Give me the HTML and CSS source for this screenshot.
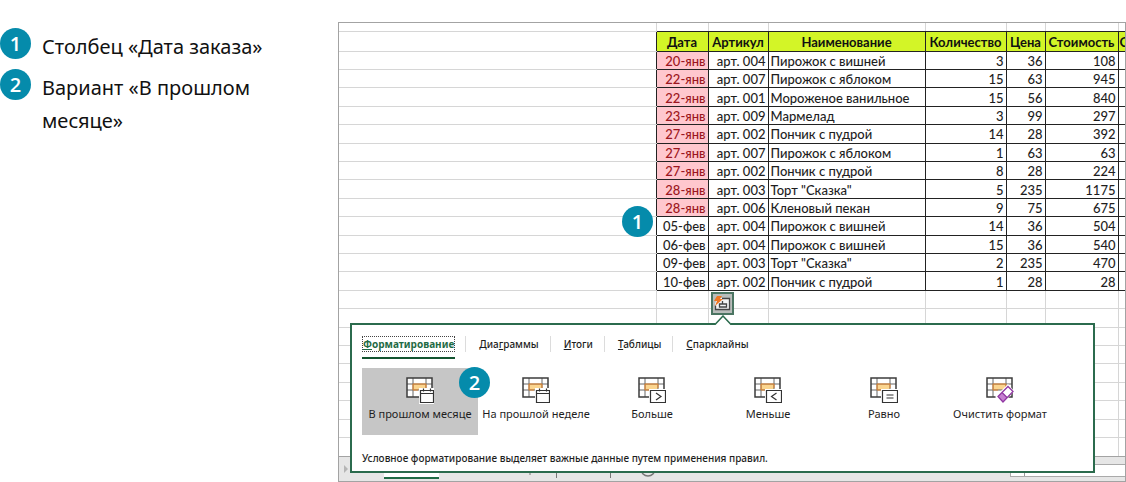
FILE: index.html
```html
<!DOCTYPE html>
<html lang="ru">
<head>
<meta charset="utf-8">
<title>Условное форматирование</title>
<link rel="stylesheet" href="styles.css">
</head>
<body>
<svg class="defs" aria-hidden="true">
  <symbol id="grid" viewBox="0 0 28 27">
    <path d="M1 1h25v19H1z" fill="#fff"/>
    <path d="M7 7h13v6H7z" fill="#fbd58f"/>
    <path d="M7 1v19M20 1v19M1 7h25M1 13h25" stroke="#666" fill="none"/>
    <path d="M7 13V7h13v4M7 13h5" stroke="#e8862a" fill="none"/>
    <path d="M1 1h25v19H1z" stroke="#3c3c3c" stroke-width="1.5" fill="none"/>
  </symbol>
  <symbol id="calendar" viewBox="0 0 28 27">
    <use href="#grid"/>
    <path d="M13 11h15v16H13z" fill="#fff"/>
    <path d="M14.500 13.500h13v12h-13zM14.500 16.500h13M17.500 11.500v3M24.500 11.500v3" stroke="#333" fill="none" stroke-width="1.200"/>
  </symbol>
  <symbol id="box" viewBox="0 0 28 27">
    <use href="#grid"/>
    <path d="M11 12h17v15H11z" fill="#fff"/>
    <path d="M12.500 13.500h15v12h-15z" stroke="#333" fill="none" stroke-width="1.200"/>
  </symbol>
</svg>
<main class="page">
  <ol class="steps">
    <li><span class="badge">1</span><span class="step-text">Столбец «Дата заказа»</span></li>
    <li><span class="badge">2</span><span class="step-text">Вариант «В прошлом месяце»</span></li>
  </ol>
  <section class="sheet">
    <table class="cells">
      <colgroup><col><col class="c-date"><col class="c-art"><col class="c-name"><col class="c-qty"><col class="c-price"><col class="c-cost"><col class="c-rest"></colgroup>
      <thead>
        <tr class="top"><td></td><td></td><td></td><td></td><td></td><td></td><td></td><td></td></tr>
        <tr class="head"><td></td><th>Дата</th><th>Артикул</th><th>Наименование</th><th>Количество</th><th>Цена</th><th>Стоимость</th><th class="cut">С</th></tr>
      </thead>
      <tbody class="data">
        <tr class="hit"><td></td><td>20-янв</td><td>арт. 004</td><td>Пирожок с вишней</td><td>3</td><td>36</td><td>108</td><td></td></tr>
        <tr class="hit"><td></td><td>22-янв</td><td>арт. 007</td><td>Пирожок с яблоком</td><td>15</td><td>63</td><td>945</td><td></td></tr>
        <tr class="hit"><td></td><td>22-янв</td><td>арт. 001</td><td>Мороженое ванильное</td><td>15</td><td>56</td><td>840</td><td></td></tr>
        <tr class="hit"><td></td><td>23-янв</td><td>арт. 009</td><td>Мармелад</td><td>3</td><td>99</td><td>297</td><td></td></tr>
        <tr class="hit"><td></td><td>27-янв</td><td>арт. 002</td><td>Пончик с пудрой</td><td>14</td><td>28</td><td>392</td><td></td></tr>
        <tr class="hit"><td></td><td>27-янв</td><td>арт. 007</td><td>Пирожок с яблоком</td><td>1</td><td>63</td><td>63</td><td></td></tr>
        <tr class="hit"><td></td><td>27-янв</td><td>арт. 002</td><td>Пончик с пудрой</td><td>8</td><td>28</td><td>224</td><td></td></tr>
        <tr class="hit"><td></td><td>28-янв</td><td>арт. 003</td><td>Торт "Сказка"</td><td>5</td><td>235</td><td>1175</td><td></td></tr>
        <tr class="hit"><td></td><td>28-янв</td><td>арт. 006</td><td>Кленовый пекан</td><td>9</td><td>75</td><td>675</td><td></td></tr>
        <tr><td></td><td>05-фев</td><td>арт. 004</td><td>Пирожок с вишней</td><td>14</td><td>36</td><td>504</td><td></td></tr>
        <tr><td></td><td>06-фев</td><td>арт. 004</td><td>Пирожок с вишней</td><td>15</td><td>36</td><td>540</td><td></td></tr>
        <tr><td></td><td>09-фев</td><td>арт. 003</td><td>Торт "Сказка"</td><td>2</td><td>235</td><td>470</td><td></td></tr>
        <tr><td></td><td>10-фев</td><td>арт. 002</td><td>Пончик с пудрой</td><td>1</td><td>28</td><td>28</td><td></td></tr>
      </tbody>
      <tbody>
        <tr><td></td><td></td><td></td><td></td><td></td><td></td><td></td><td></td></tr>
        <tr><td></td><td></td><td></td><td></td><td></td><td></td><td></td><td></td></tr>
        <tr><td></td><td></td><td></td><td></td><td></td><td></td><td></td><td></td></tr>
        <tr><td></td><td></td><td></td><td></td><td></td><td></td><td></td><td></td></tr>
        <tr><td></td><td></td><td></td><td></td><td></td><td></td><td></td><td></td></tr>
        <tr><td></td><td></td><td></td><td></td><td></td><td></td><td></td><td></td></tr>
        <tr><td></td><td></td><td></td><td></td><td></td><td></td><td></td><td></td></tr>
        <tr><td></td><td></td><td></td><td></td><td></td><td></td><td></td><td></td></tr>
        <tr><td></td><td></td><td></td><td></td><td></td><td></td><td></td><td></td></tr>
      </tbody>
    </table>
    <footer class="sheetbar">
      <svg class="bar-arrow" viewBox="0 0 6 8" aria-hidden="true"><path d="M1 0l4 4-4 4z" fill="#b5b5b5"/></svg>
      <span class="sheet-tab"></span>
      <svg class="bar-marks" viewBox="0 0 240 24" aria-hidden="true"><path d="M91 15v3M117.500 13v8M171.500 13v8" stroke="#777" fill="none"/><circle cx="209" cy="12" r="7" fill="none" stroke="#777" stroke-width="1.500"/></svg>
      <span class="scroll"><span class="scroll-button"></span></span>
    </footer>

    <button class="quick" type="button" aria-label="Быстрый анализ">
      <svg viewBox="0 0 18 18"><path d="M4 3h13v12H2V9z" fill="#f4f4f4"/><path d="M9 3.500h7.500v11h-14v-4M9.500 6v3h-3v3h7V9h-4" stroke="#444" fill="none" stroke-width="1.300"/><path d="M4 1h5L7 4h3L2 11l2-5H1z" fill="#ee7623"/></svg>
    </button>
    <span class="badge marker-column">1</span>

    <div class="popup">
      <svg class="caret" viewBox="0 0 18 10" aria-hidden="true"><path d="M1 9l8-8 8 8v1H1z" fill="#fff"/><path d="M0 9.500h1L9 1l8 8.500h1" fill="none" stroke="#2b6b4d" stroke-width="1.500"/></svg>
      <nav class="tabs">
        <button class="tab active" type="button"><span><u>Ф</u>орматирование</span></button>
        <button class="tab" type="button"><span>Диа<u>г</u>раммы</span></button>
        <button class="tab" type="button"><span><u>И</u>тоги</span></button>
        <button class="tab" type="button"><span><u>Т</u>аблицы</span></button>
        <button class="tab" type="button"><span><u>С</u>парклайны</span></button>
      </nav>
      <div class="options">
        <button class="option chosen" type="button"><svg viewBox="0 0 28 27"><use href="#calendar"/></svg>В прошлом месяце</button>
        <button class="option" type="button"><svg viewBox="0 0 28 27"><use href="#calendar"/></svg>На прошлой неделе</button>
        <button class="option" type="button"><svg viewBox="0 0 28 27"><use href="#box"/><path d="M18 16l5 3.500-5 3.500" stroke="#333" fill="none" stroke-width="1.200"/></svg>Больше</button>
        <button class="option" type="button"><svg viewBox="0 0 28 27"><use href="#box"/><path d="M22.500 16l-5 3.500 5 3.500" stroke="#333" fill="none" stroke-width="1.200"/></svg>Меньше</button>
        <button class="option" type="button"><svg viewBox="0 0 28 27"><use href="#box"/><path d="M16.500 18h7M16.500 21h7" stroke="#333" fill="none" stroke-width="1.200"/></svg>Равно</button>
        <button class="option" type="button"><svg viewBox="0 0 28 27"><use href="#grid"/><path d="M9 20L22 7l6 7-11 13z" fill="#fff"/><path d="M12 19.500l4-4 5 5-4 4.500z" fill="#c57fd0"/><path d="M12 19.500L22 9.500l5 5L17 25zM16 15.500l5 5" stroke="#9138a3" fill="none" stroke-width="1.300"/></svg>Очистить формат</button>
      </div>
      <p class="hint">Условное форматирование выделяет важные данные путем применения правил.</p>
      <span class="badge marker-option">2</span>
    </div>
  </section>
</main>
</body>
</html>
```
FILE: styles.css
```css
* { box-sizing: border-box; }
body { margin: 0; background: #fff; color: #1e1e1e; font-family: "Noto Sans", "Open Sans", sans-serif; }
button { margin: 0; padding: 0; border: 0; background: none; color: inherit; font: inherit; }
.defs { position: absolute; width: 0; height: 0; }

.page { display: grid; grid-template-columns: 338px 1fr; align-items: start; padding-top: 22px; }

.steps { margin: 0; padding: 6px 60px 0 0; list-style: none; display: grid; gap: 6px; color: #111; font-size: 20px; line-height: 33px; }
.steps li { display: flex; gap: 11px; }
.step-text { padding-top: 2px; }

.badge { display: flex; flex: none; align-items: center; justify-content: center; width: 31px; height: 31px; border-radius: 50%; background: #058bab; color: #fff; font: 600 20px/31px "Open Sans", "Noto Sans", sans-serif; }

.sheet { position: relative; min-width: 0; border: 1px solid #a3a3a3; }

.cells { width: 100%; height: 433px; table-layout: fixed; border-collapse: collapse; border-style: hidden; font: 500 13px/16px Lato, "Open Sans", sans-serif; }
.cells td, .cells th { height: 18px; padding: 1px 2px 0; border: 1px solid #d6d6d6; white-space: nowrap; overflow: hidden; text-align: right; }
.cells .top td { height: 8px; padding: 0; }
.cells .top td:not(:first-child) { border-bottom-color: #222; }
.cells .head th { height: 20px; padding: 2px 0 0; border-color: #222; background: #d3f527; color: #111; font-weight: 700; text-align: center; }
.cells .head .cut { padding-left: 1px; text-align: left; }
.cells .data td:not(:first-child) { border-color: #222; }
.cells .head td:first-child, .cells .data td:first-child { border-right-color: #222; }
.cells .data td:nth-child(4) { text-align: left; }
.cells .hit td:nth-child(2) { background: #ffc7ce; color: #9c1620; }
.c-date { width: 52px; }
.c-art { width: 60px; }
.c-name { width: 157px; }
.c-qty { width: 81px; }
.c-price { width: 39px; }
.c-cost { width: 73px; }
.c-rest { width: 7px; }

.sheetbar { display: flex; height: 25px; border-top: 1px solid #a3a3a3; background: #e6e6e6; }
.bar-arrow { width: 6px; height: 8px; margin: 8px 0 0 4px; }
.sheet-tab { width: 55px; height: 22px; margin-left: 35px; border-bottom: 2px solid #1f6b45; background: #fff; }
.bar-marks { width: 240px; height: 24px; }
.scroll { width: 115px; height: 13px; margin: 7px 0 0 auto; border: 1px solid #aaa; border-right: 0; background: #fff; }
.scroll-button { display: block; width: 14px; height: 11px; border-right: 1px solid #999; }

.quick { position: absolute; top: 269px; right: 391px; width: 23px; height: 23px; border: 2px solid #4b7562; background: #b9bdbb; }
.quick svg { display: block; width: 18px; height: 18px; }
.marker-column { position: absolute; top: 183px; right: 472px; }

.popup { position: absolute; top: 300px; left: 11px; right: 30px; padding: 11px 10px 5px; border: 2px solid #2b6b4d; background: #fff; font-size: 10px; font-weight: 500; line-height: 16px; }
.caret { position: absolute; top: -10px; right: 361px; width: 18px; height: 10px; }
.tabs { display: flex; align-items: flex-start; }
.tab { display: flex; padding-bottom: 5px; }
.tab span { border: 1px solid transparent; line-height: 14px; }
.tab + .tab { margin-left: 10px; padding: 0 0 0 12px; border-left: 1px solid #dcdcdc; }
.tab.active { border-bottom: 2px solid #11532f; color: #1f6b45; font-weight: 700; }
.tab.active span { border: 1px dotted #444; }
.options { display: grid; grid-template-columns: repeat(6, 116px); margin-top: 9px; font-size: 11px; font-weight: 400; }
.option { display: flex; flex-direction: column; align-items: center; gap: 2px; height: 67px; padding-top: 9px; white-space: nowrap; }
.option svg { display: block; width: 28px; height: 27px; }
.option.chosen { background: #c6c6c6; }
.hint { margin: 15px 0 0; }
.marker-option { position: absolute; top: 42px; left: 107px; }
```
